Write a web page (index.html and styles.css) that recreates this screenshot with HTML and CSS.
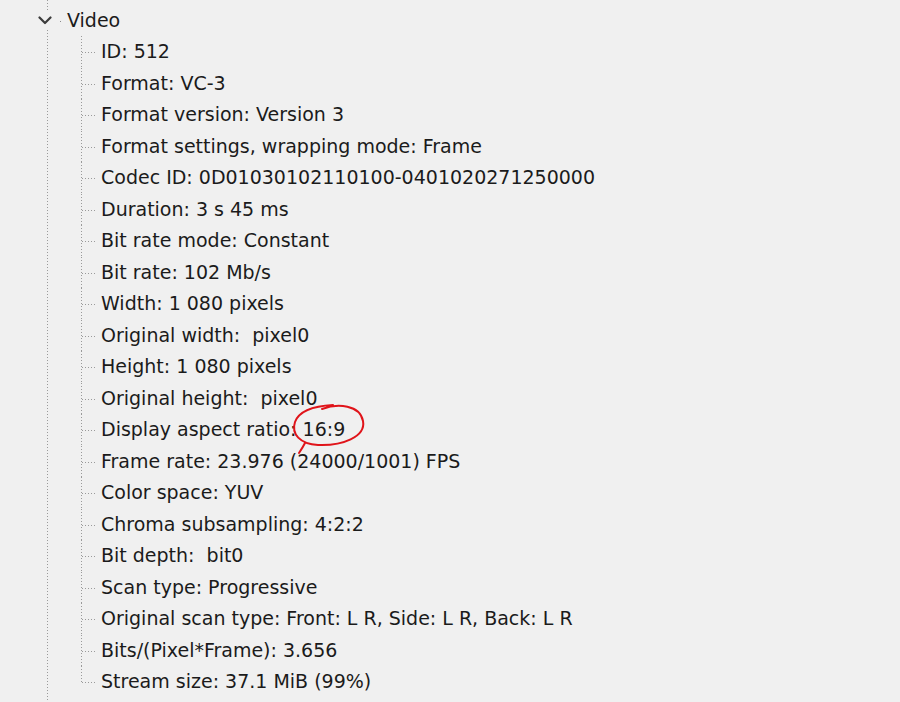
FILE: index.html
```html
<!DOCTYPE html>
<html>
<head>
<meta charset="utf-8">
<link rel="stylesheet" href="styles.css">
</head>
<body>
<div class="tree">
  <div class="row prev"><span class="label">Writing application</span></div>
  <div class="node">
    <div class="row parent">
      <span class="chev"><svg width="14" height="9" viewBox="0 0 14 9"><path d="M1.5 1.5 L7 7 L12.5 1.5" fill="none" stroke="#3c3c3c" stroke-width="2.2" stroke-linecap="round" stroke-linejoin="round"/></svg></span>
      <span class="tick"></span>
      <span class="label">Video</span>
    </div>
    <ul class="children">
      <li>ID: 512</li>
      <li>Format: VC-3</li>
      <li>Format version: Version 3</li>
      <li>Format settings, wrapping mode: Frame</li>
      <li>Codec ID: 0D01030102110100-0401020271250000</li>
      <li>Duration: 3 s 45 ms</li>
      <li>Bit rate mode: Constant</li>
      <li>Bit rate: 102 Mb/s</li>
      <li>Width: 1 080 pixels</li>
      <li>Original width:&nbsp; pixel0</li>
      <li>Height: 1 080 pixels</li>
      <li>Original height:&nbsp; pixel0</li>
      <li>Display aspect ratio: 16:9</li>
      <li>Frame rate: 23.976 (24000/1001) FPS</li>
      <li>Color space: YUV</li>
      <li>Chroma subsampling: 4:2:2</li>
      <li>Bit depth:&nbsp; bit0</li>
      <li>Scan type: Progressive</li>
      <li>Original scan type: Front: L R, Side: L R, Back: L R</li>
      <li>Bits/(Pixel*Frame): 3.656</li>
      <li class="last">Stream size: 37.1 MiB (99%)</li>
    </ul>
  </div>
</div>
<svg class="mark" width="900" height="702" viewBox="0 0 900 702">
  <path d="M322 409 C338 403 360 405 363 421 C366 437 342 446 318 445 C300 444 291 434 295 422 C299 411 314 406 333 405 M305 443 C303 447 301 450 299 453" fill="none" stroke="#e0141a" stroke-width="2" stroke-linecap="round"/>
</svg>
</body>
</html>
```
FILE: styles.css
```css
html, body {
  margin: 0;
  padding: 0;
}
body {
  background: #f0f0f0;
  width: 900px;
  height: 702px;
  overflow: hidden;
  position: relative;
  font-family: "DejaVu Sans", sans-serif;
  font-size: 19px;
  color: #1b1b1b;
}
.tree {
  margin-top: -27px;
  min-height: 760px;
  background-image: repeating-linear-gradient(to bottom, #9a9a9a 0 1px, transparent 1px 3px);
  background-size: 1px 100%;
  background-position: 47px 0;
  background-repeat: no-repeat;
}
.row {
  height: 31.5px;
  display: flex;
  align-items: center;
}
.prev {
  padding-left: 101px;
}
.parent {
  padding-left: 37px;
}
.chev {
  width: 16px;
  height: 16px;
  display: flex;
  align-items: center;
  justify-content: center;
  background: #f0f0f0;
}
.chev svg {
  display: block;
}
.tick {
  width: 1px;
  height: 1px;
  background: #8a8a8a;
  margin-left: 7px;
  margin-top: 2px;
}
.parent .label {
  margin-left: 6px;
}
.children {
  list-style: none;
  margin: 0;
  padding: 0 0 0 81px;
}
.children li {
  height: 31.5px;
  line-height: 31.5px;
  padding-left: 20px;
  white-space: pre;
  background-image:
    repeating-linear-gradient(to bottom, #9a9a9a 0 1px, transparent 1px 3px),
    repeating-linear-gradient(to right, #9a9a9a 0 1px, transparent 1px 3px);
  background-size: 1px 100%, 15px 1px;
  background-position: 0 0, 1px 16px;
  background-repeat: no-repeat;
}
.children li.last {
  background-size: 1px 16px, 15px 1px;
}
.mark {
  position: absolute;
  left: 0;
  top: 0;
  pointer-events: none;
}
```
